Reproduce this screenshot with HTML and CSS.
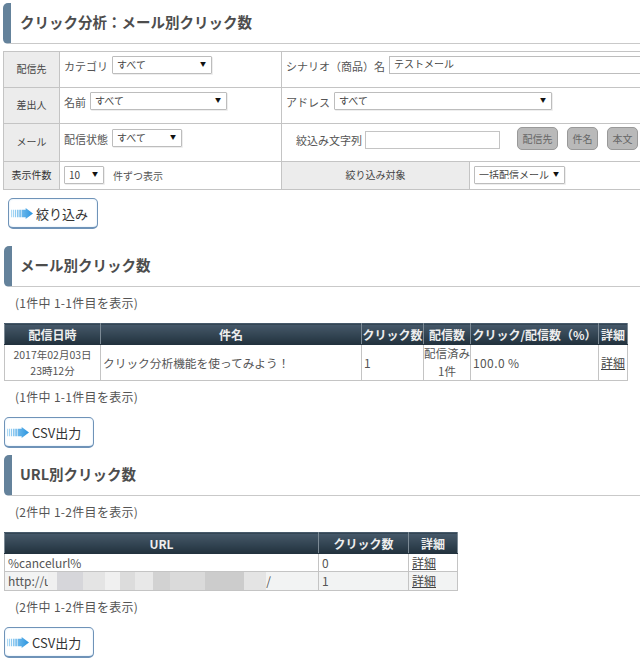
FILE: index.html
```html
<!DOCTYPE html>
<html lang="ja">
<head>
<meta charset="utf-8">
<title>クリック分析</title>
<link rel="stylesheet" href="styles.css">
</head>
<body>
<svg class="defs" width="0" height="0" aria-hidden="true">
  <defs>
    <linearGradient id="ag" x1="0" x2="1" y1="0" y2="0"><stop offset="0" stop-color="#a8d8f5"/><stop offset="1" stop-color="#2b95e0"/></linearGradient>
    <symbol id="arrow" viewBox="0 0 24 12">
      <path fill="url(#ag)" d="M0 2h1v8H0zM2 2h1.2v8H2zM4.2 2h1.4v8H4.2zM6.6 2h1.6v8H6.6zM9 2h1.8v8H9zM11.5 2H16V0l8 6-8 6v-2h-4.500z"/>
    </symbol>
  </defs>
</svg>
<h1 class="heading heading-top">クリック分析：メール別クリック数</h1>
<table class="filter">
  <colgroup><col class="f1"><col class="f2"><col class="f3"><col class="f4"></colgroup>
  <tr class="r1">
    <th>配信先</th>
    <td><div class="line"><label>カテゴリ</label><span class="sel w100"><select><option>すべて</option></select></span></div></td>
    <td colspan="2"><div class="line"><label>シナリオ（商品）名</label><input class="scenario" type="text" value="テストメール"></div></td>
  </tr>
  <tr class="r2">
    <th>差出人</th>
    <td><div class="line"><label>名前</label><span class="sel w137"><select><option>すべて</option></select></span></div></td>
    <td colspan="2"><div class="line"><label>アドレス</label><span class="sel w218"><select><option>すべて</option></select></span></div></td>
  </tr>
  <tr class="r3">
    <th>メール</th>
    <td><div class="line"><label>配信状態</label><span class="sel w70"><select><option>すべて</option></select></span></div></td>
    <td colspan="2"><div class="line narrow"><label>絞込み文字列</label><input class="keyword" type="text"><span class="chips"><button class="chip">配信先</button><button class="chip">件名</button><button class="chip">本文</button></span></div></td>
  </tr>
  <tr class="r4">
    <th>表示件数</th>
    <td><div class="line"><span class="sel w40 boxed"><select><option>10</option></select></span><span class="unit">件ずつ表示</span></div></td>
    <th>絞り込み対象</th>
    <td><span class="sel w91 boxed"><select><option>一括配信メール</option></select></span></td>
  </tr>
</table>
<button class="action action-filter"><svg class="arrow"><use href="#arrow"/></svg>絞り込み</button>

<h2 class="heading">メール別クリック数</h2>
<p class="count">(1件中 1-1件目を表示)</p>
<table class="data mail">
  <colgroup><col class="m1"><col class="m2"><col class="m3"><col class="m4"><col class="m5"><col class="m6"></colgroup>
  <thead><tr><th>配信日時</th><th>件名</th><th>クリック数</th><th>配信数</th><th>クリック/配信数（%）</th><th>詳細</th></tr></thead>
  <tbody><tr>
    <td class="date">2017年02月03日<br>23時12分</td>
    <td class="subject">クリック分析機能を使ってみよう！</td>
    <td>1</td>
    <td class="sent">配信済み<br>1件</td>
    <td class="rate">100.0 %</td>
    <td><a href="#">詳細</a></td>
  </tr></tbody>
</table>
<p class="count after">(1件中 1-1件目を表示)</p>
<button class="action action-csv"><svg class="arrow"><use href="#arrow"/></svg>CSV出力</button>

<h2 class="heading">URL別クリック数</h2>
<p class="count">(2件中 1-2件目を表示)</p>
<table class="data url">
  <colgroup><col class="u1"><col class="u2"><col class="u3"></colgroup>
  <thead><tr><th>URL</th><th>クリック数</th><th>詳細</th></tr></thead>
  <tbody>
    <tr><td>%cancelurl%</td><td>0</td><td><a href="#">詳細</a></td></tr>
    <tr class="alt"><td><span class="urlcell">http://u<span class="blur"></span>/</span></td><td>1</td><td><a href="#">詳細</a></td></tr>
  </tbody>
</table>
<p class="count after">(2件中 1-2件目を表示)</p>
<button class="action action-csv"><svg class="arrow"><use href="#arrow"/></svg>CSV出力</button>
</body>
</html>
```
FILE: styles.css
```css
html, body { margin: 0; padding: 0; background: #fff; }
body {
  width: 640px;
  height: 669px;
  overflow: hidden;
  font-family: "Noto Sans CJK JP", "Open Sans", sans-serif;
  font-size: 12px;
  color: #4a4a4a;
}
.defs { position: absolute; }

.heading {
  box-sizing: border-box;
  height: 41px;
  margin: 0 0 0 4px;
  padding: 0 0 4px 8px;
  display: flex;
  align-items: center;
  font-size: 14.5px;
  font-weight: 700;
  color: #4d4d4d;
  border-bottom: 1px solid #c9c9c9;
  border-left: 8px solid #64829b;
  border-radius: 5px 0 0 5px;
}
.heading-top { margin: 3px 0 0 3px; padding-left: 9px; }

/* Filter form */
.filter {
  border-collapse: collapse;
  table-layout: fixed;
  width: 660px;
  margin: 7px 0 0 3px;
}
.f1 { width: 56px; }
.f2 { width: 222px; }
.f3 { width: 188px; }
.f4 { width: 194px; }
.filter th, .filter td {
  border: 1px solid #c4c4c4;
  padding: 0;
  font-size: 10px;
  font-weight: 400;
  vertical-align: top;
}
.filter th { background: #ececec; text-align: center; vertical-align: middle; color: #444; padding-bottom: 2px; }
.filter td { padding: 4px 4px 0; }
.r1 { height: 36px; }
.r2 { height: 36px; }
.r3 { height: 38px; }
.r4 { height: 28px; }
.filter td label { font-size: 11px; color: #555; white-space: nowrap; margin-top: 2px; }
.line { display: flex; align-items: center; gap: 4px; height: 18px; }
.line.narrow { padding-left: 10px; height: 19px; }
.r3 .line { margin-top: 1px; }
.sel {
  position: relative;
  display: inline-block;
  flex: none;
  height: 18px;
  box-sizing: border-box;
}
.sel select {
  appearance: none;
  box-sizing: border-box;
  width: 100%;
  height: 18px;
  margin: 0;
  padding: 0 0 4px 4px;
  border: 1px solid #bdbdbd;
  border-radius: 1px;
  background: #fff;
  font: 10px "Noto Sans CJK JP", sans-serif;
  color: #444;
  box-shadow: 1px 1px 0 #eee;
  display: block;
}
.sel::after {
  content: "▼";
  position: absolute;
  right: 6px;
  top: 1px;
  font-size: 6px;
  line-height: 14px;
  color: #111;
  pointer-events: none;
}
.w100 { width: 100px; }
.w137 { width: 137px; }
.w218 { width: 218px; }
.w70 { width: 70px; }
.w40 { width: 40px; }
.w91 { width: 91px; }
.scenario {
  box-sizing: border-box;
  width: 300px;
  height: 18px;
  margin: 0;
  padding: 0 0 3px 4px;
  border: 1px solid #bdbdbd;
  font: 10px "Noto Sans CJK JP", sans-serif;
  color: #444;
  flex: none;
}
.keyword {
  box-sizing: border-box;
  width: 135px;
  height: 18px;
  margin: 2px 0 0 -1px;
  padding: 0 4px;
  border: 1px solid #c4c4c4;
  flex: none;
}
.chips { display: flex; gap: 9px; margin: 0 0 0 13px; }
.chip {
  box-sizing: border-box;
  height: 23px;
  padding: 0 4.5px;
  border: 1px solid #999;
  border-radius: 5px;
  background: #b9b9b9;
  color: #666;
  font: 10px "Noto Sans CJK JP", sans-serif;
}
.unit { margin-left: 5px; font-size: 10px; color: #555; }
.r4 td { padding-top: 4px; }
.r4 th:first-child { color: #333; }

/* Arrow buttons */
.action {
  box-sizing: border-box;
  display: flex;
  align-items: center;
  gap: 3px;
  width: 90px;
  height: 31px;
  margin: 0 0 0 4px;
  padding: 0 0 0 2px;
  border: 1px solid #6f93b8;
  border-bottom-width: 2px;
  border-radius: 5px;
  background: #fff;
  box-shadow: inset 0 0 2px #cfe4f5;
  font: 13px "Noto Sans CJK JP", sans-serif;
  color: #333;
}
.arrow { flex: none; width: 22px; height: 11px; }
.action-filter { margin: 8px 0 17px 8px; }
.action-csv { margin-bottom: 7px; }

/* Listings */
.count { margin: 7px 0 0 15px; line-height: 18px; font-size: 12px; color: #555; letter-spacing: 0.3px; }
.count.after { margin-top: 7px; margin-bottom: 11px; }
.data {
  border-collapse: collapse;
  table-layout: fixed;
  margin: 11px 0 0 4px;
}
.mail { width: 623px; }
.url { width: 453px; }
.m1 { width: 96px; }
.m2 { width: 261px; }
.m3 { width: 62px; }
.m4 { width: 47px; }
.m5 { width: 128px; }
.m6 { width: 29px; }
.u1 { width: 314px; }
.u2 { width: 90px; }
.u3 { width: 49px; }
.data th {
  height: 20px;
  padding: 0;
  background: linear-gradient(#46596a, #22323e);
  color: #eee;
  font-size: 12px;
  font-weight: 700;
  border: 1px solid #7c8a95;
  border-top-color: #46596a;
  border-bottom-color: #22323e;
  white-space: nowrap;
  overflow: hidden;
}
.data td {
  padding: 0 2px;
  border: 1px solid #c4c4c4;
  font-size: 12px;
  color: #555;
  line-height: 17px;
}
.mail tbody tr { height: 35px; }
.mail td { white-space: nowrap; overflow: hidden; }
.mail .date { text-align: center; font-size: 10.500px; line-height: 15.500px; padding: 0; }
.mail .subject { font-size: 11.700px; }
.mail .sent { text-align: center; padding: 0; font-size: 11.500px; line-height: 17.500px; }
.mail .rate { letter-spacing: 0.4px; }
.data a { color: #444; }
.url tbody tr { height: 18px; }
.url td { line-height: 16px; padding: 0 3px; }
.url .alt td { background: #f2f3f3; }
.urlcell { display: flex; align-items: center; white-space: nowrap; }
.blur {
  display: inline-block;
  width: 218px;
  height: 18px;
  flex: none;
  margin-left: -3px;
  background: linear-gradient(90deg, #f0f0f0 0 4%, #d6d6da 4% 16%, #e4e4e4 16% 26%, #f0f0f0 26% 33%, #dcdcdc 33% 40%, #e8e8e8 40% 48%, #d2d2d2 48% 56%, #dadada 56% 72%, #cccccc 72% 90%, #e4e4e4 90% 100%);
}
```
